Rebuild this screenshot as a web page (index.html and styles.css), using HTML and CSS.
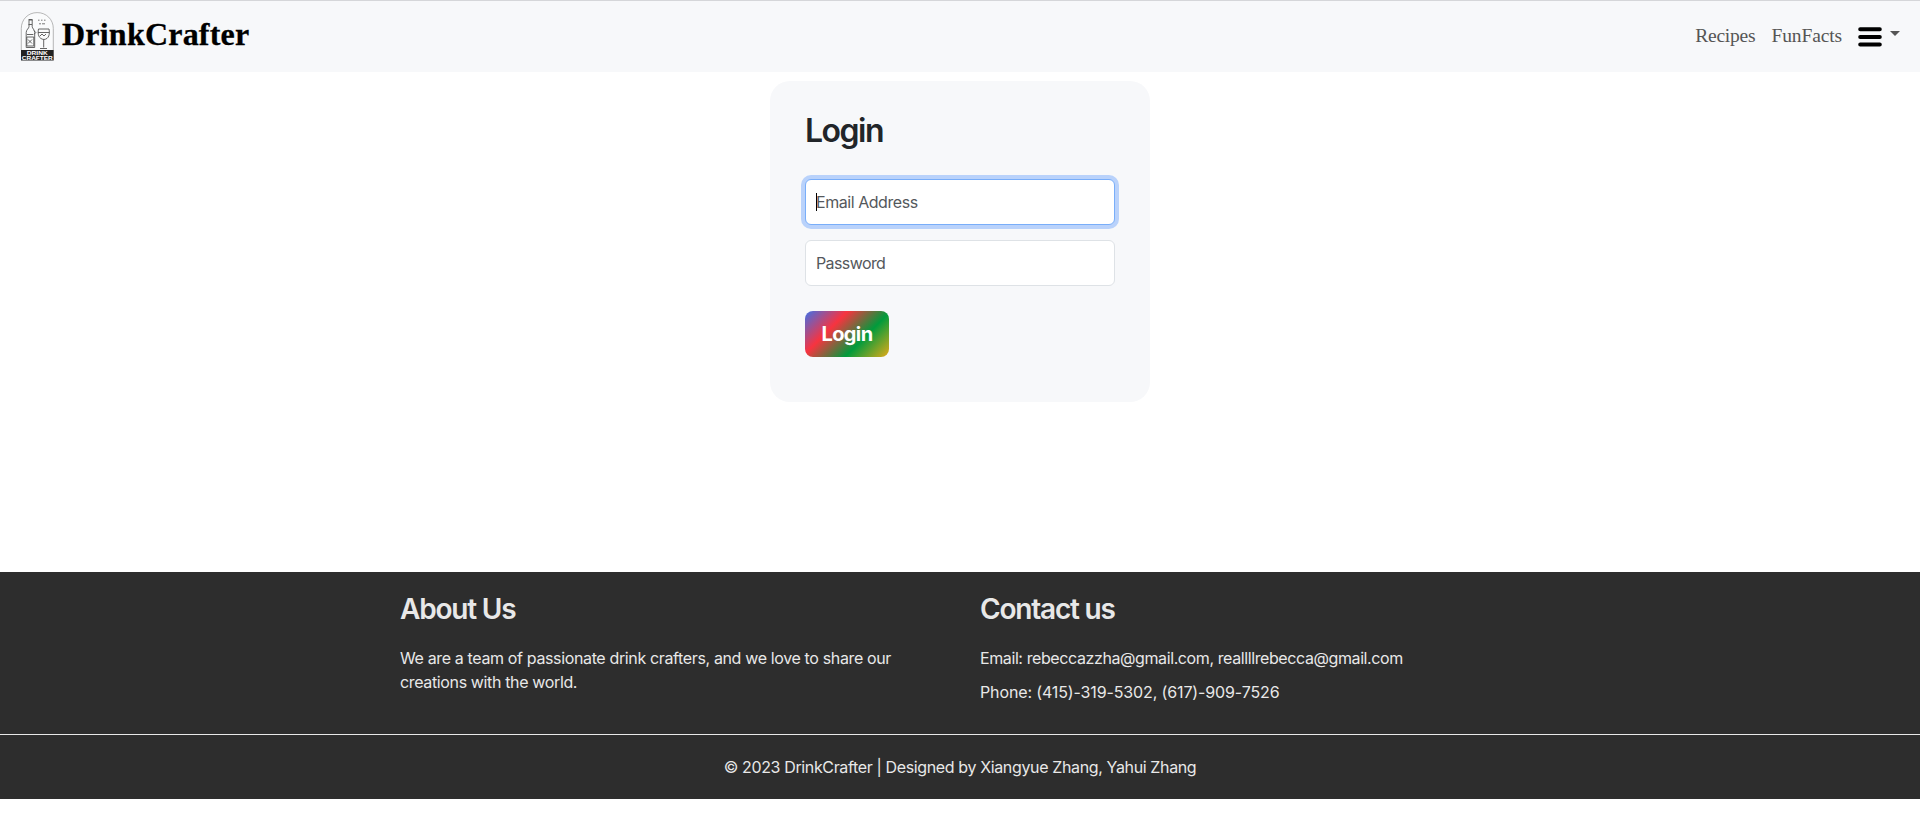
FILE: index.html
```html
<!DOCTYPE html>
<html lang="en">
<head>
<meta charset="utf-8">
<title>DrinkCrafter</title>
<link rel="stylesheet" href="styles.css">
</head>
<body>
<nav class="navbar">
  <a class="brand">
    <svg class="logo" viewBox="0 0 34 49" width="34" height="49" fill="none">
      <path d="M1.300 38V16.500C1.300 7.500 8 .6 17.200 .6s16.100 6.900 16.100 15.900V38" fill="#fafbfc" stroke="#999" stroke-width=".7"/>
      <g stroke="#555" stroke-width=".9">
        <path d="M8.500 7.500h4M9 8v6.500c0 2-2.800 3-2.800 6v15h8.500v-15c0-3-2.500-4-2.500-6V8"/>
        <path d="M7 22.500h6M6.800 25h7v9h-7zM8 27.500l4 4M12 27.500l-4 4M8.500 12.500h3.500M9 8h3.500"/>
        <path d="M13.800 18.500l2 2-2 2"/>
        <path d="M18.500 17h10.500c1 5 0 10-5 10.500C18.500 27 17.500 22 18.500 17zM18 20.500h11.500M23.700 27.500v8M20 36.500h7M20 24l2-2 2 2 2-2"/>
      </g>
      <path d="M18 8.200h1.500M21 8.200h1.500M24 8.200h1.500M19 11.800h2M22 11.800h3" stroke="#777"/>
      <path d="M1 38h32.700v10.500H1z" fill="#222"/>
      <text class="logo-text" x="17.300" y="42.800" textLength="21" lengthAdjust="spacingAndGlyphs">DRINK</text>
      <text class="logo-text" x="17.300" y="47.500" textLength="31" lengthAdjust="spacingAndGlyphs">CRAFTER</text>
    </svg>
    <span class="brand-name">DrinkCrafter</span>
  </a>
  <div class="nav-links">
    <a class="nav-link recipes">Recipes</a>
    <a class="nav-link facts">FunFacts</a>
    <a class="menu">
      <svg width="24" height="20" viewBox="0 0 24 20"><path d="M2.200 2.200h19.600M2.200 10h19.600M2.200 17.600h19.600" stroke="#000" stroke-width="4" stroke-linecap="round"/></svg>
      <span class="caret"></span>
    </a>
  </div>
</nav>
<main class="main">
  <form class="card">
    <h2 class="title">Login</h2>
    <div class="field focused"><span class="cursor"></span><span class="email">Email Address</span></div>
    <div class="field"><span class="password">Password</span></div>
    <button class="submit" type="button">Login</button>
  </form>
</main>
<footer class="footer">
  <div class="columns">
    <section>
      <h3 class="about">About Us</h3>
      <p class="desc">We are a team of passionate drink crafters, and we love to share our<br>creations with the world.</p>
    </section>
    <section>
      <h3 class="contact">Contact us</h3>
      <p class="mail">Email: rebeccazzha@gmail.com, reallllrebecca@gmail.com</p>
      <p class="phone">Phone: (415)-319-5302, (617)-909-7526</p>
    </section>
  </div>
  <div class="copyright">© 2023 DrinkCrafter | Designed by Xiangyue Zhang, Yahui Zhang</div>
</footer>
</body>
</html>
```
FILE: styles.css
```css
* { box-sizing: border-box; }
body { margin: 0; background: #fff; color: #212529; font: 16px/24px Inter, "Liberation Sans", sans-serif; }
.navbar { height: 72px; display: flex; justify-content: space-between; align-items: flex-start; padding: 11px 20px 0; background: #f7f8fa; border-top: 1px solid #d5d6d9; }
.brand { display: flex; color: #000; }
.brand-name { margin-left: 8px; font: bold 32px/44px "Liberation Serif", serif; letter-spacing: .22px; -webkit-text-stroke: .3px #000; }
.logo-text { fill: #fff; font: bold 5px "Liberation Sans", sans-serif; text-anchor: middle; }
.nav-links { display: flex; font: 19.500px/47px "Liberation Serif", serif; color: #555; }
.nav-link { margin-right: 16px; white-space: nowrap; }
.recipes { letter-spacing: -.2px; }
.facts { letter-spacing: -.12px; }
.menu { display: flex; padding-top: 15px; }
.caret { margin: 4px 0 0 8px; width: 10px; height: 5px; border: 5px solid transparent; border-top-color: #555; border-bottom: 0; }
.main { height: 500px; padding-top: 9px; }
.card { width: 380px; height: 321px; margin: 0 auto; padding: 31px 35px; background: #f7f8fa; border-radius: 20px; }
.title { margin: 0 0 29px; font-size: 32px; line-height: 38px; font-weight: 600; letter-spacing: -1.5px; }
.field { height: 46px; margin-bottom: 15px; padding: 0 10px; display: flex; align-items: center; background: #fff; border: 1px solid #dee2e6; border-radius: 6px; color: #54585c; }
.focused { border-color: #79aef9; box-shadow: 0 0 0 4px #b9d2fb; }
.cursor { width: 1px; height: 18px; margin-right: -1px; background: #000; }
.email { letter-spacing: -.45px; }
.password { letter-spacing: -.6px; }
.submit { display: block; width: 84px; height: 46px; margin-top: 25px; padding: 0; border: 0; border-radius: 8px; color: #fff; font: bold 20px/46px Inter, sans-serif; letter-spacing: -.6px; background: linear-gradient(135deg, #4070e8 0%, #f8333f 33%, #009b3c 66%, #e4aa18 100%); }
.footer { height: 227px; background: #2d2d2d; color: #e8e8e8; }
.columns { height: 162px; display: grid; grid-template-columns: 580px 580px; padding: 20px 0 0 400px; }
.columns h3 { margin: 0 0 20px; font-size: 28px; line-height: 34px; font-weight: 600; letter-spacing: -1.2px; }
.columns p { margin: 0 0 10px; white-space: nowrap; }
.desc { letter-spacing: -.36px; }
.mail { letter-spacing: -.4px; }
.phone { letter-spacing: -.13px; }
.copyright { height: 65px; padding-top: 20px; border-top: 1px solid #e8e8e8; text-align: center; letter-spacing: -.365px; }
```
